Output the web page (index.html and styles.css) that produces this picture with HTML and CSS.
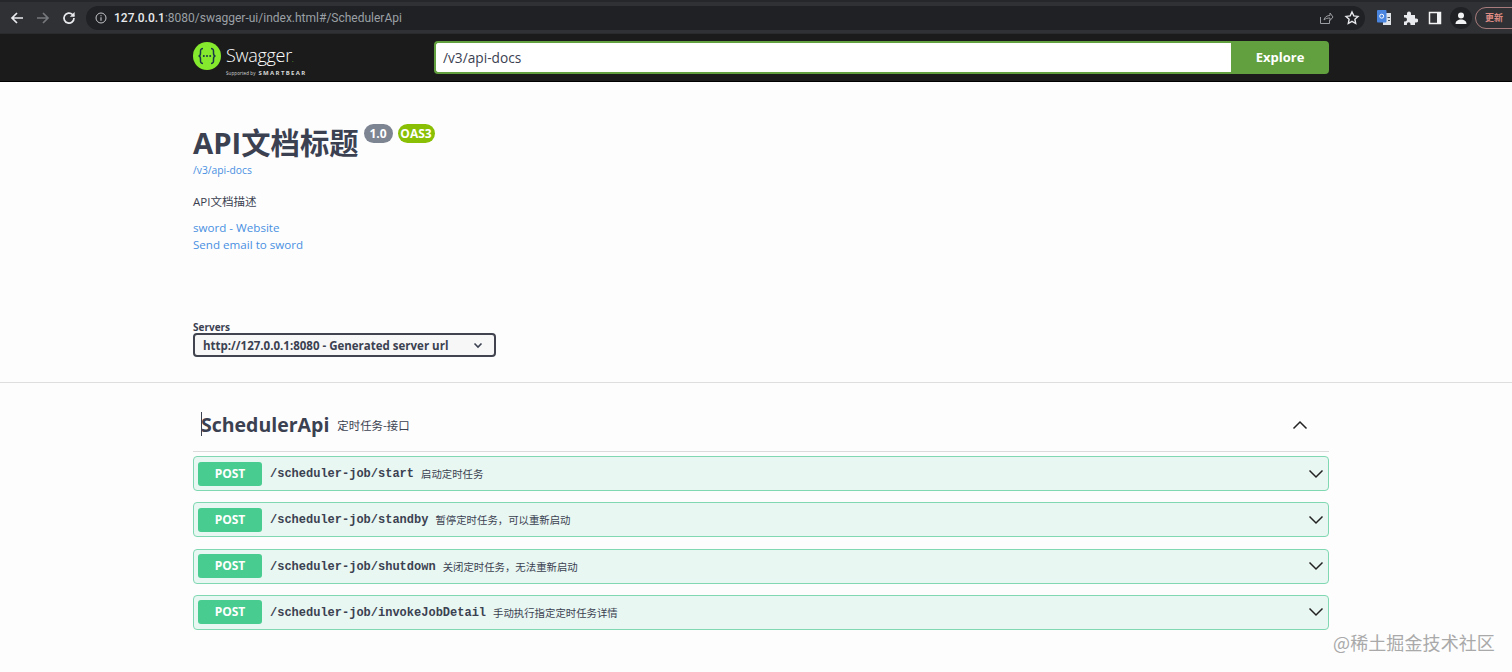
FILE: index.html
```html
<!DOCTYPE html>
<html lang="zh">
<head>
<meta charset="utf-8">
<title>Swagger UI</title>
<link rel="stylesheet" href="styles.css">
</head>
<body>
<div class="chrome">
  <div class="nav-icons">
    <svg class="ic" viewBox="0 0 16 16"><path d="M14 8H3M8 3L3 8l5 5" fill="none" stroke="#e8eaed" stroke-width="1.7"/></svg>
    <svg class="ic" viewBox="0 0 16 16"><path d="M2 8h11M8 3l5 5-5 5" fill="none" stroke="#75787c" stroke-width="1.7"/></svg>
    <svg class="ic" viewBox="0 0 16 16"><path d="M13 8a5 5 0 1 1-1.5-3.5L13 6" fill="none" stroke="#e8eaed" stroke-width="1.7"/><path d="M13.6 2v4.8H8.8z" fill="#e8eaed"/></svg>
  </div>
  <div class="omnibox">
    <svg class="info" viewBox="0 0 12 12"><circle cx="6" cy="6" r="5" fill="none" stroke="#c4c7ca" stroke-width="1"/><path d="M6 5.2v3.6M6 3.2v1.1" stroke="#c4c7ca" stroke-width="1.1"/></svg>
    <span class="url"><span class="host">127.0.0.1</span>:8080/swagger-ui/index.html#/SchedulerApi</span>
    <span class="grow"></span>
    <svg class="ic omni-ic" viewBox="0 0 16 16"><path d="M2.5 7v6.5h9V10M6 10c.5-3 3-4.500 6-4.500V3l3 4-3 3.500V8c-2.500 0-4.500.5-6 2z" fill="none" stroke="#9a9da1" stroke-width="1"/></svg>
    <svg class="ic omni-ic" viewBox="0 0 16 16"><path d="M8 2l1.800 3.900 4.200.5-3.100 2.900.8 4.200L8 11.400l-3.700 2.100.8-4.200L2 6.400l4.200-.5z" fill="none" stroke="#e8eaed" stroke-width="1.400"/></svg>
  </div>
  <div class="ext-icons">
    <svg class="ic" viewBox="0 0 16 16"><rect x="7" y="3" width="8" height="12" fill="#dfe3e8"/><rect x="1" y="0" width="9.500" height="12.500" rx="1" fill="#4a86e0"/><circle cx="5.700" cy="6.200" r="2" fill="none" stroke="#fff" stroke-width="1"/><path d="M11.500 7.500h2.500M12 10.500h2" stroke="#44505c" stroke-width="1"/></svg>
    <svg class="ic" viewBox="0 0 16 16"><path d="M2 5h3V3.500a2 2 0 0 1 4 0V5h4v3.500h1.200a2 2 0 0 1 0 4H13V15H8.500v-1a1.800 1.800 0 0 0-3.600 0v1H2v-3.500h1a2 2 0 0 0 0-4H2z" fill="#e8eaed"/></svg>
    <svg class="ic" viewBox="0 0 16 16"><rect x="2.500" y="2.500" width="11" height="11" fill="none" stroke="#f1f3f4" stroke-width="1.500"/><rect x="10" y="2.500" width="3.500" height="11" fill="#f1f3f4"/></svg>
    <span class="avatar"><svg viewBox="0 0 16 16"><circle cx="8" cy="5.500" r="3" fill="#f1f3f4"/><path d="M2.500 14c0-3 2.500-4.500 5.500-4.500s5.500 1.500 5.500 4.500z" fill="#f1f3f4"/></svg></span>
    <span class="update">更新</span>
  </div>
</div>

<header class="topbar">
  <div class="wrap topbar-in">
    <div class="logo">
      <svg class="logo-mark" viewBox="0 0 28 28"><circle cx="14" cy="14" r="14" fill="#85ea2d"/><path d="M10 6.500c-3 0-2.500 2.500-2.500 4.500 0 2-.8 3-2 3 1.200 0 2 1 2 3 0 2-.5 4.500 2.500 4.500M18 6.500c3 0 2.500 2.500 2.500 4.500 0 2 .8 3 2 3-1.200 0-2 1-2 3 0 2 .5 4.500-2.500 4.500" fill="none" stroke="#173647" stroke-width="1.500"/><circle cx="10.800" cy="14" r="1" fill="#173647"/><circle cx="14" cy="14" r="1" fill="#173647"/><circle cx="17.200" cy="14" r="1" fill="#173647"/></svg>
      <div class="logo-text">
        <span class="logo-name">Swagger<i class="dot">.</i></span>
        <span class="logo-sub"><small>Supported by</small> SMARTBEAR</span>
      </div>
    </div>
    <form class="search">
      <input class="search-input" type="text" value="/v3/api-docs">
      <button class="explore" type="button">Explore</button>
    </form>
  </div>
</header>

<main>
  <section class="wrap info-block">
    <h1 class="title">API文档标题<span class="badges"><span class="badge ver">1.0</span><span class="badge oas">OAS3</span></span></h1>
    <a class="doc-link" href="#">/v3/api-docs</a>
    <p class="desc">API文档描述</p>
    <a class="contact" href="#">sword - Website</a>
    <a class="contact" href="#">Send email to sword</a>
  </section>

  <section class="scheme">
    <div class="wrap">
      <span class="servers-label">Servers</span>
      <div class="select"><span>http://127.0.0.1:8080 - Generated server url</span>
        <svg viewBox="0 0 12 12"><path d="M2.500 4.500L6 8l3.500-3.500" fill="none" stroke="#3b4151" stroke-width="1.600"/></svg>
      </div>
    </div>
  </section>

  <section class="wrap ops">
    <div class="tag">
      <h3 class="tag-name"><span class="caret"></span>SchedulerApi</h3>
      <small class="tag-desc">定时任务-接口</small>
      <svg class="tag-arrow" viewBox="0 0 20 20"><path d="M3.500 13.500L10 7l6.500 6.500" fill="none" stroke="#222" stroke-width="1.500"/></svg>
    </div>
    <div class="op"><span class="method">POST</span><span class="path">/scheduler-job/start</span><span class="summary">启动定时任务</span><svg class="op-arrow" viewBox="0 0 20 20"><path d="M3.500 6.500L10 13l6.500-6.500" fill="none" stroke="#222" stroke-width="1.500"/></svg></div>
    <div class="op"><span class="method">POST</span><span class="path">/scheduler-job/standby</span><span class="summary">暂停定时任务，可以重新启动</span><svg class="op-arrow" viewBox="0 0 20 20"><path d="M3.500 6.500L10 13l6.500-6.500" fill="none" stroke="#222" stroke-width="1.500"/></svg></div>
    <div class="op"><span class="method">POST</span><span class="path">/scheduler-job/shutdown</span><span class="summary">关闭定时任务，无法重新启动</span><svg class="op-arrow" viewBox="0 0 20 20"><path d="M3.500 6.500L10 13l6.500-6.500" fill="none" stroke="#222" stroke-width="1.500"/></svg></div>
    <div class="op"><span class="method">POST</span><span class="path">/scheduler-job/invokeJobDetail</span><span class="summary">手动执行指定定时任务详情</span><svg class="op-arrow" viewBox="0 0 20 20"><path d="M3.500 6.500L10 13l6.500-6.500" fill="none" stroke="#222" stroke-width="1.500"/></svg></div>
  </section>
</main>
<div class="watermark">@稀土掘金技术社区</div>
</body>
</html>
```

FILE: styles.css
```css
* { box-sizing: border-box; }
html, body { height: 672px; overflow: hidden; }
body {
  margin: 0;
  background: #fdfdfd;
  color: #3b4151;
  font-family: "Open Sans", "Noto Sans CJK SC", sans-serif;
  position: relative;
}
.chrome {
  height: 34px;
  background: #303135;
  border-top: 2px solid #26272a;
  border-bottom: 1px solid #2a2b2e;
  display: flex;
  align-items: center;
  padding-left: 9px;
  overflow: hidden;
}
.ic { width: 16px; height: 16px; flex: none; }
.nav-icons { display: flex; gap: 10px; width: 77px; flex: none; }
.omnibox {
  flex: none;
  width: 1279px;
  height: 24px;
  border-radius: 12px;
  background: #202124;
  display: flex;
  align-items: center;
  padding: 0 5px 0 9px;
  gap: 6px;
}
.info { width: 12px; height: 12px; flex: none; }
.url { font: 12px "Roboto", sans-serif; color: #9aa0a6; margin-left: 1px; }
.host { color: #e8eaed; font-weight: 500; }
.grow { flex: 1; }
.omni-ic { margin-left: 4px; }
.ext-icons { display: flex; align-items: center; gap: 9.500px; margin-left: 11px; flex: none; }
.avatar { width: 22px; height: 22px; margin: 0 -3px; padding: 3px; border-radius: 50%; background: #202124; display: flex; }
.update {
  width: 50px; height: 22px; flex: none; margin-left: -3px;
  border: 1px solid #a87c7c; border-radius: 11px;
  color: #dc8a82; font-size: 9px; font-weight: 700; line-height: 20px; padding-left: 9px;
  font-family: "Noto Sans CJK SC", sans-serif;
}
.wrap { width: 1136px; margin-left: 193px; }
.topbar { height: 48px; background: #1b1b1b; border-bottom: 1px solid #000; }
.topbar-in { display: flex; height: 47px; align-items: center; justify-content: space-between; }
.logo { display: flex; align-items: center; gap: 5px; color: #fff; margin-top: 1px; }
.logo-mark { width: 28px; height: 28px; flex: none; margin-top: -4px; }
.logo-text { display: flex; flex-direction: column; margin-top: 5px; }
.logo-name { font: 300 18px/20px "Open Sans", sans-serif; letter-spacing: -.3px; }
.dot { font-style: normal; font-size: 8px; color: #85ea2d; }
.logo-sub { font: 700 6px/8px "Open Sans", sans-serif; letter-spacing: 1.350px; color: #d8d8d8; margin-top: 0; }
.logo-sub small { font: 400 4.500px "Open Sans", sans-serif; letter-spacing: .1px; }
.search { display: flex; width: 895px; height: 33px; margin-top: -1px; }
.search-input {
  flex: 1; min-width: 0; height: 33px;
  border: 2px solid #62a03f; border-right: 0;
  border-radius: 4px 0 0 4px;
  background: #fff; color: #3b4151;
  padding: 0 7px;
  font: 13.700px "Open Sans", sans-serif;
}
.explore {
  width: 98px; height: 33px; border: 0;
  border-radius: 0 4px 4px 0;
  background: #62a03f; color: #fff;
  font: 700 13px "Open Sans", sans-serif;
}
.info-block { padding-top: 43px; height: 231px; }
.title {
  margin: 0; font: 700 29.300px/36px "Open Sans", "Noto Sans CJK SC", sans-serif;
  color: #3b4151; height: 36px; display: flex; align-items: flex-start;
}
.badges { display: flex; gap: 5px; margin: -1px 0 0 5px; }
.badge {
  height: 19px; border-radius: 10px; color: #fff;
  font: 700 12px/19px "Open Sans", sans-serif; text-align: center;
}
.ver { width: 29px; background: #7d8492; }
.oas { width: 37px; background: #89bf04; }
.doc-link { display: block; font: 10.300px/14px "Open Sans", sans-serif; color: #4990e2; text-decoration: none; margin-top: 2px; height: 14px; }
.desc { margin: 16.500px 0 0; font: 11.500px/16px "Open Sans", "Noto Sans CJK SC", sans-serif; color: #3b4151; height: 20px; }
.contact { display: block; font: 11.600px/17px "Open Sans", sans-serif; color: #4990e2; text-decoration: none; margin: 0; }
.desc + .contact { margin-top: 5.500px; }
.scheme { height: 70px; border-bottom: 1px solid #dedede; padding-top: 7px; }
.servers-label { display: block; font: 700 10px/14px "Open Sans", sans-serif; color: #3b4151; }
.select {
  width: 303px; height: 24px; margin-top: -1px;
  border: 2px solid #41444e; border-radius: 4px;
  background: #f7f7f7;
  display: flex; align-items: center; justify-content: space-between;
  padding: 0 10px 0 8px;
  font: 700 11.500px "Open Sans", sans-serif; color: #3b4151;
}
.select svg { width: 12px; height: 12px; }
.ops { padding-top: 21px; }
.tag {
  height: 48px; border-bottom: 1px solid #d9dbdd;
  display: flex; align-items: center; position: relative;
  padding: 0 0 5px 8px; margin-bottom: 4px;
}
.tag-name { margin: 0; font: 700 19.500px/28px "Open Sans", sans-serif; color: #3b4151; position: relative; }
.caret { position: absolute; left: 0; top: 1px; width: 1px; height: 24px; background: #3b4151; }
.tag-desc { margin-left: 8px; font: 11.400px "Noto Sans CJK SC", sans-serif; color: #3b4151; }
.tag-arrow { position: absolute; right: 19px; top: 11px; width: 20px; height: 20px; }
.op {
  height: 35px; margin-bottom: 11.300px;
  background: #e8f7f1; border: 1px solid #7fd8b2; border-radius: 4px;
  display: flex; align-items: center; padding: 0 4px;
}
.method {
  width: 64px; height: 24px; border-radius: 3px; background: #49cc90; color: #fff;
  font: 700 12px/24px "Open Sans", sans-serif; text-align: center; flex: none;
}
.path { margin-left: 8px; font: 700 12px/14px "Liberation Mono", monospace; color: #3b4151; padding-top: 1px; }
.summary { margin-left: 7px; font: 10.400px "Noto Sans CJK SC", sans-serif; color: #3b4151; flex: 1; }
.op-arrow { width: 20px; height: 20px; margin-right: -2px; flex: none; }
.watermark {
  position: absolute; left: 1333px; top: 629px;
  font: 18px "Noto Sans CJK SC", sans-serif; color: #a9a9a9; letter-spacing: .1px;
}
```
